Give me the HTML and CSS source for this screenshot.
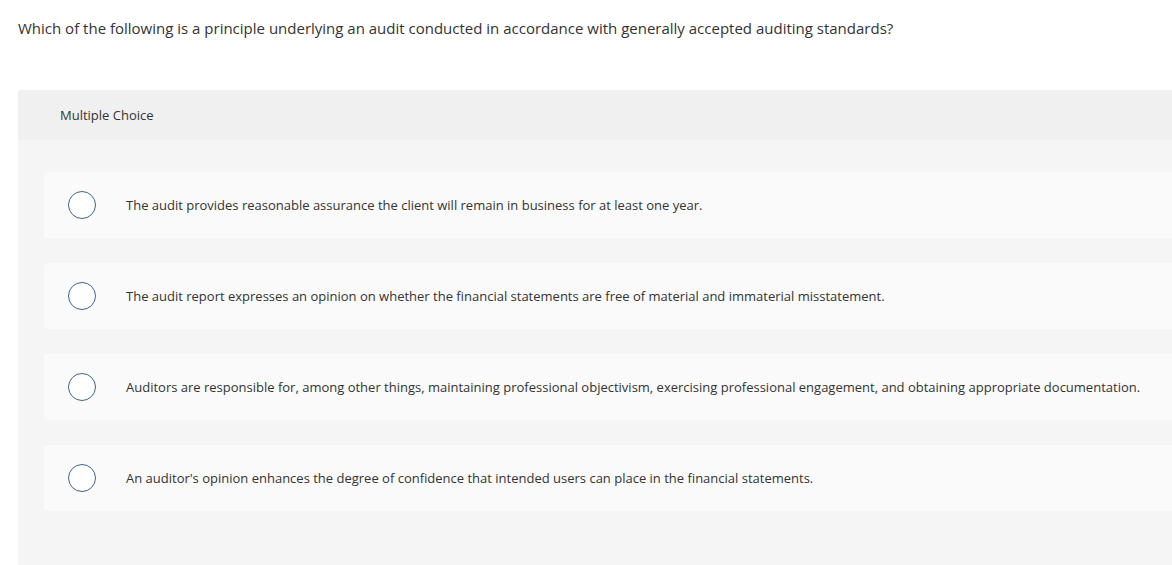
FILE: index.html
```html
<!DOCTYPE html>
<html>
<head>
<meta charset="utf-8">
<link rel="stylesheet" href="styles.css">
</head>
<body>
<div class="page">
  <p class="question">Which of the following is a principle underlying an audit conducted in accordance with generally accepted auditing standards?</p>
  <div class="panel">
    <div class="panel-head">Multiple Choice</div>
    <div class="panel-body">
      <div class="option">
        <span class="radio"></span>
        <span class="label">The audit provides reasonable assurance the client will remain in business for at least one year.</span>
      </div>
      <div class="option">
        <span class="radio"></span>
        <span class="label">The audit report expresses an opinion on whether the financial statements are free of material and immaterial misstatement.</span>
      </div>
      <div class="option">
        <span class="radio"></span>
        <span class="label">Auditors are responsible for, among other things, maintaining professional objectivism, exercising professional engagement, and obtaining appropriate documentation.</span>
      </div>
      <div class="option">
        <span class="radio"></span>
        <span class="label">An auditor's opinion enhances the degree of confidence that intended users can place in the financial statements.</span>
      </div>
    </div>
  </div>
</div>
</body>
</html>
```
FILE: styles.css
```css
html, body {
  margin: 0;
  padding: 0;
  overflow: hidden;
  background: #fff;
}
body {
  font-family: "Open Sans", "Liberation Sans", sans-serif;
  color: #333;
}
.page {
  padding: 18px 0 0 18px;
  width: 1200px;
}
.question {
  margin: 0;
  font-size: 15px;
  line-height: 20px;
  color: #333;
}
.panel {
  margin-top: 52px;
  border-radius: 3px 0 0 0;
  overflow: hidden;
}
.panel-head {
  background: #f0f0f0;
  height: 50px;
  display: flex;
  align-items: center;
  padding-left: 42px;
  font-size: 13px;
}
.panel-body {
  background: #f5f5f5;
  padding: 32px 0 60px 26px;
  display: flex;
  flex-direction: column;
  gap: 25px;
}
.option {
  background: #fafafa;
  height: 66px;
  display: flex;
  align-items: center;
  border-radius: 2px 0 0 2px;
}
.radio {
  width: 26px;
  height: 26px;
  border: 1.5px solid #3a6591;
  border-radius: 50%;
  margin-left: 24px;
  flex: none;
  background: #fff;
}
.label {
  margin-left: 30px;
  font-size: 13px;
  color: #333;
}
```
